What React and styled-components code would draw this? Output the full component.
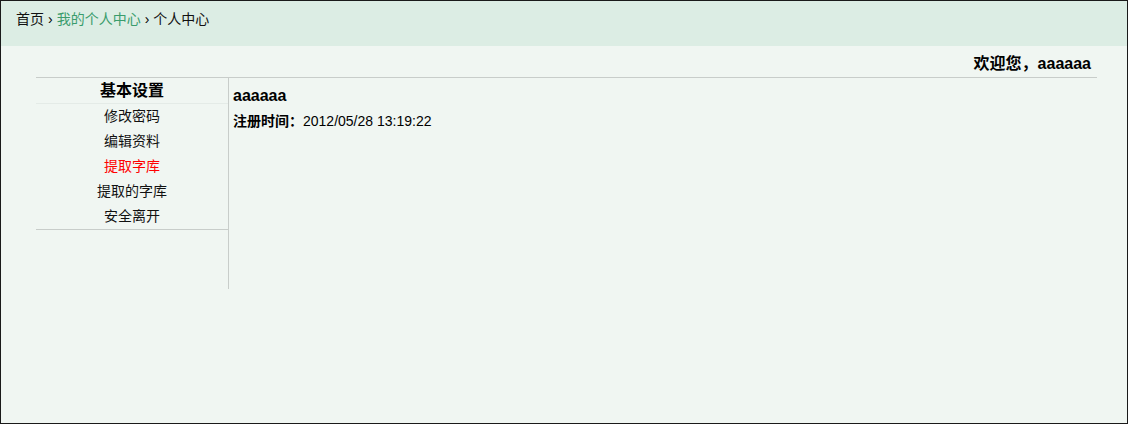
import styled, { createGlobalStyle } from "styled-components";

const Global = createGlobalStyle`
  body {
    margin: 0;
    font-family: Arial, "Liberation Sans", "Noto Sans CJK SC", sans-serif;
    color: #000;
  }
`;

const Page = styled.div`
  box-sizing: border-box;
  width: 1128px;
  height: 424px;
  border: 1px solid #1a1a1a;
  background: #f0f6f2;
`;

const Header = styled.div`
  height: 45px;
  background: #dcede4;
  padding: 9px 0 0 15px;
  box-sizing: border-box;
  font-size: 14px;
  line-height: 18px;
`;

const Crumb = styled.span`
  color: ${(p) => (p.$link ? "#3a9c6c" : "#111")};
`;

const Sep = styled.span`
  margin: 0 4px;
`;

const Main = styled.div`
  padding: 0 30px 0 35px;
`;

const Welcome = styled.div`
  text-align: right;
  font-size: 16px;
  font-weight: bold;
  line-height: 20px;
  padding: 8px 6px 3px 0;
`;

const Panel = styled.div`
  display: flex;
  border-top: 1px solid #c8cdca;
`;

const Sidebar = styled.div`
  width: 192px;
`;

const SideTitle = styled.div`
  height: 25px;
  line-height: 25px;
  text-align: center;
  font-size: 16px;
  font-weight: bold;
  border-bottom: 1px solid #e4ebe7;
`;

const Menu = styled.ul`
  list-style: none;
  margin: 0;
  padding: 0;
  border-bottom: 1px solid #c8cdca;
`;

const MenuItem = styled.li`
  height: 25px;
  line-height: 25px;
  text-align: center;
  font-size: 14px;
  color: ${(p) => (p.$active ? "#ff0000" : "#111")};
`;

const Content = styled.div`
  flex: 1;
  box-sizing: border-box;
  height: 211px;
  border-left: 1px solid #c8cdca;
  padding: 8px 0 0 4px;
`;

const UserName = styled.div`
  font-size: 16px;
  font-weight: bold;
  line-height: 20px;
`;

const Info = styled.div`
  font-size: 14px;
  line-height: 18px;
  margin-top: 6px;
`;

const Label = styled.b``;

const menu = ["修改密码", "编辑资料", "提取字库", "提取的字库", "安全离开"];

export default function App() {
  return (
    <>
      <Global />
      <Page>
        <Header>
          <Crumb>首页</Crumb>
          <Sep>›</Sep>
          <Crumb $link>我的个人中心</Crumb>
          <Sep>›</Sep>
          <Crumb>个人中心</Crumb>
        </Header>
        <Main>
          <Welcome>欢迎您，aaaaaa</Welcome>
          <Panel>
            <Sidebar>
              <SideTitle>基本设置</SideTitle>
              <Menu>
                {menu.map((m) => (
                  <MenuItem key={m} $active={m === "提取字库"}>
                    {m}
                  </MenuItem>
                ))}
              </Menu>
            </Sidebar>
            <Content>
              <UserName>aaaaaa</UserName>
              <Info>
                <Label>注册时间：</Label>2012/05/28 13:19:22
              </Info>
            </Content>
          </Panel>
        </Main>
      </Page>
    </>
  );
}
